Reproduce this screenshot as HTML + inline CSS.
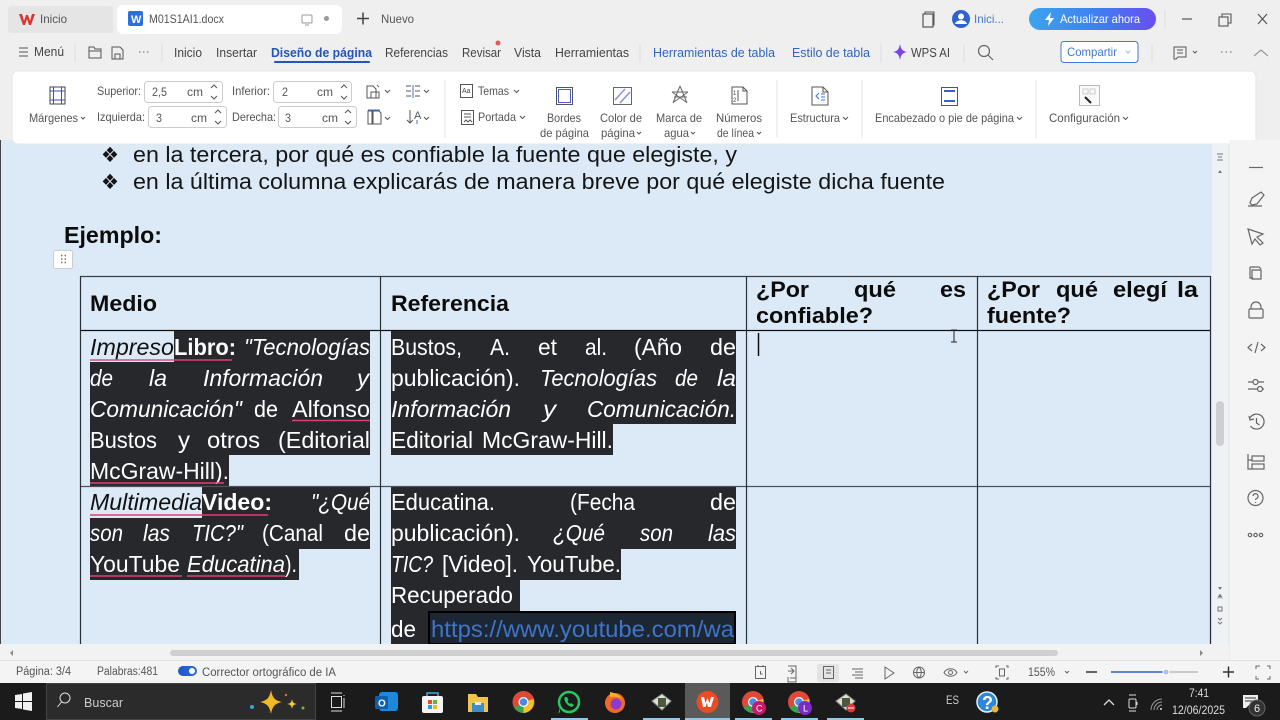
<!DOCTYPE html>
<html lang="es"><head><meta charset="utf-8"><title>M01S1AI1.docx</title>
<style>
html,body{margin:0;padding:0;width:1280px;height:720px;overflow:hidden;background:#efeff0}
svg{display:block;position:absolute;left:0;top:0}
text{font-family:"Liberation Sans",sans-serif;white-space:pre}
.u{font-size:12.5px;fill:#444}
.g{font-size:12px;fill:#555}
.c{font-size:23px;fill:#fff}
.k{fill:#111}
.i{font-style:italic}
.b{font-weight:bold}
.d{font-size:22px;fill:#151515}
.h{font-size:23px;font-weight:bold;fill:#0c0c0c}
.s{fill:none;stroke:#555;stroke-width:1}
.w{fill:none;stroke:#666;stroke-width:1.2}
</style></head><body>
<svg width="1280" height="720" viewBox="0 0 1280 720" xmlns="http://www.w3.org/2000/svg">
<!-- top chrome -->
<rect width="1280" height="720" fill="#efeff0"/>
<rect x="8" y="6" width="105" height="27" rx="3" fill="#e5e5e6"/>
<rect x="117" y="5" width="225" height="29" rx="6" fill="#fff"/>
<path d="M19 14h3l2 7 2-6h2l2 6 2-7h3l-4 11h-2l-2-6-2 6h-2z" fill="#d8352f"/>
<text x="40" y="23" class="g" textLength="27" lengthAdjust="spacingAndGlyphs">Inicio</text>
<rect x="128" y="11" width="15" height="15" rx="2" fill="#2b6fe0"/>
<text x="131" y="23" style="font-size:11px;font-weight:bold;fill:#fff">W</text>
<text x="149" y="23" class="g" fill="#444" textLength="75" lengthAdjust="spacingAndGlyphs">M01S1AI1.docx</text>
<rect x="302" y="15" width="10" height="8" rx="1" fill="none" stroke="#999"/><path d="M305 25h4" stroke="#999"/>
<circle cx="326.500" cy="18.500" r="2.500" fill="#999"/>
<path d="M357 18.500h12M363 12.500v12" stroke="#444" stroke-width="1.500"/>
<text x="381" y="23" class="g" fill="#666" textLength="33" lengthAdjust="spacingAndGlyphs">Nuevo</text>
<rect x="923" y="14" width="10" height="13" fill="none" stroke="#555" stroke-width="1.200"/><path d="M925 14v-2h9v13h-1" fill="none" stroke="#555"/>
<circle cx="961" cy="19" r="9" fill="#2e62cf"/><circle cx="961" cy="16.500" r="3" fill="#fff"/><path d="M955 24c1-5 11-5 12 0z" fill="#fff"/>
<text x="974" y="23" class="g" style="fill:#4a78d0" textLength="30" lengthAdjust="spacingAndGlyphs">Inici...</text>
<defs>
<linearGradient id="up" x1="0" x2="1" y1="0" y2="0"><stop offset="0" stop-color="#3ba4ee"/><stop offset=".55" stop-color="#3f7fef"/><stop offset="1" stop-color="#6a4df0"/></linearGradient>
<linearGradient id="sl" x1="0" x2="1"><stop offset="0" stop-color="#1f57c8"/><stop offset="1" stop-color="#2d6ae0"/></linearGradient>
</defs>
<rect x="1029" y="8" width="127" height="22" rx="11" fill="url(#up)"/>
<path d="M1051 12l-6 8h4l-1 6 6-8h-4z" fill="#fff"/>
<text x="1060" y="23" class="g" style="fill:#fff" textLength="80" lengthAdjust="spacingAndGlyphs">Actualizar ahora</text>
<path d="M1165 10v18" stroke="#ddd"/>
<path d="M1182 19h10" stroke="#555" stroke-width="1.200"/>
<rect x="1219" y="17" width="9" height="9" fill="none" stroke="#555" stroke-width="1.100"/><path d="M1222 17v-3h9v9h-3" fill="none" stroke="#555" stroke-width="1.100"/>
<path d="M1258 14l9 10M1267 14l-9 10" stroke="#555" stroke-width="1.200"/>
<!-- menu -->
<path d="M19 48h9M19 52h9M19 56h9" stroke="#555"/>
<text x="34" y="56" class="u" textLength="30" lengthAdjust="spacingAndGlyphs">Menú</text>
<path d="M75 44v18" stroke="#ddd"/>
<path d="M89 47h5l1 2h6v9H89z" class="s"/><path d="M89 51h12" class="s"/>
<path d="M112 47h8l3 3v9h-11z M115 54h5v5h-5z" class="s"/>
<path d="M139 52h1.500M143 52h1.500M147 52h1.500" stroke="#666"/>
<path d="M162 44v18" stroke="#ddd"/>
<text x="174" y="57" class="u" textLength="28" lengthAdjust="spacingAndGlyphs">Inicio</text>
<text x="216" y="57" class="u" textLength="41" lengthAdjust="spacingAndGlyphs">Insertar</text>
<text x="271" y="57" class="u b" style="fill:#2455b8" textLength="101" lengthAdjust="spacingAndGlyphs">Diseño de página</text>
<rect x="274" y="61" width="96" height="2" rx="1" fill="#2455b8"/>
<text x="385" y="57" class="u" textLength="63" lengthAdjust="spacingAndGlyphs">Referencias</text>
<text x="462" y="57" class="u" textLength="39" lengthAdjust="spacingAndGlyphs">Revisar</text>
<circle cx="498" cy="43" r="2.500" fill="#e2595a"/>
<text x="514" y="57" class="u" textLength="27" lengthAdjust="spacingAndGlyphs">Vista</text>
<text x="555" y="57" class="u" textLength="74" lengthAdjust="spacingAndGlyphs">Herramientas</text>
<path d="M640 44v18" stroke="#ddd"/>
<text x="653" y="57" class="u" style="fill:#2f66c0" textLength="122" lengthAdjust="spacingAndGlyphs">Herramientas de tabla</text>
<text x="792" y="57" class="u" style="fill:#2f66c0" textLength="78" lengthAdjust="spacingAndGlyphs">Estilo de tabla</text>
<path d="M881 44v18M964 44v18" stroke="#ddd"/>
<path d="M900 44c1 5 2 7 7 8-5 1-6 3-7 8-1-5-2-7-7-8 5-1 6-3 7-8z" fill="#7a42e8"/>
<text x="911" y="57" class="u" textLength="39" lengthAdjust="spacingAndGlyphs">WPS AI</text>
<circle cx="984" cy="51" r="5.500" class="w"/><path d="M988 55l5 5" class="w"/>
<rect x="1061" y="41.500" width="77" height="21" rx="3" fill="#fff" stroke="#3f78d6"/>
<text x="1067" y="56" class="g" style="fill:#3f78d6" textLength="50" lengthAdjust="spacingAndGlyphs">Compartir</text>
<path d="M1126 51l2 2 2-2" fill="none" stroke="#9ab8e8"/>
<path d="M1152 44v18" stroke="#ddd"/>
<path d="M1174 47h12v10h-8l-2 2h-2z M1177 50h6M1177 53h6" class="s"/><path d="M1193 51l2 2 2-2" fill="none" stroke="#555"/>
<path d="M1221 52h1.500M1225.500 52h1.500M1230 52h1.500" stroke="#666"/>
<path d="M1254 56l7-6 7 6" fill="none" stroke="#888"/>
<!-- document -->
<rect x="1" y="140" width="1211" height="506" fill="#dce9f6"/>
<rect x="0" y="140" width="1" height="520" fill="#444"/>
<!-- ribbon -->
<rect x="12" y="71" width="1244" height="73" rx="6" fill="#fff" stroke="#e6e6e6"/>
<rect x="50" y="87" width="15" height="17" fill="#fff" stroke="#444"/><path d="M50 91h15M50 100h15M53.500 87v17M61.500 87v17" stroke="#3a4fc0"/>
<text x="29" y="122" class="g" textLength="49" lengthAdjust="spacingAndGlyphs">Márgenes</text><path d="M81 117l2 2 2-2" class="s"/>
<text x="97" y="95" class="g" textLength="44" lengthAdjust="spacingAndGlyphs">Superior:</text>
<rect x="144.500" y="81.500" width="78" height="21" rx="3" fill="#fff" stroke="#ccc"/>
<text x="152" y="96" class="g" textLength="15" lengthAdjust="spacingAndGlyphs">2,5</text>
<text x="187" y="96" class="g" textLength="16" lengthAdjust="spacingAndGlyphs">cm</text>
<path d="M211 88l3-3 3 3M211 96l3 3 3-3" class="s"/>
<text x="232" y="95" class="g" textLength="38" lengthAdjust="spacingAndGlyphs">Inferior:</text>
<rect x="273.500" y="81.500" width="78" height="21" rx="3" fill="#fff" stroke="#ccc"/>
<text x="282" y="96" class="g" textLength="6" lengthAdjust="spacingAndGlyphs">2</text>
<text x="317" y="96" class="g" textLength="16" lengthAdjust="spacingAndGlyphs">cm</text>
<path d="M341 88l3-3 3 3M341 96l3 3 3-3" class="s"/>
<text x="97" y="121" class="g" textLength="48" lengthAdjust="spacingAndGlyphs">Izquierda:</text>
<rect x="148.500" y="106.500" width="78" height="21" rx="3" fill="#fff" stroke="#ccc"/>
<text x="156" y="122" class="g" textLength="6" lengthAdjust="spacingAndGlyphs">3</text>
<text x="191" y="122" class="g" textLength="16" lengthAdjust="spacingAndGlyphs">cm</text>
<path d="M215 113l3-3 3 3M215 121l3 3 3-3" class="s"/>
<text x="232" y="121" class="g" textLength="44" lengthAdjust="spacingAndGlyphs">Derecha:</text>
<rect x="278.500" y="106.500" width="78" height="21" rx="3" fill="#fff" stroke="#ccc"/>
<text x="285" y="122" class="g" textLength="6" lengthAdjust="spacingAndGlyphs">3</text>
<text x="322" y="122" class="g" textLength="16" lengthAdjust="spacingAndGlyphs">cm</text>
<path d="M345 113l3-3 3 3M345 121l3 3 3-3" class="s"/>
<path d="M367 86h6l3 3v9h-9z M371 92h8v6h-8z" class="s"/><path d="M377 85l2 2" stroke="#3a6fd0"/><path d="M385 90l2.500 2.500 2.500-2.500M385 117l2.500 2.500 2.500-2.500M424 90l2.500 2.500 2.500-2.500M424 117l2.500 2.500 2.500-2.500" class="s"/>
<path d="M406 86h5M406 91h5M406 96h5M415 86h5M415 91h5M415 96h5" stroke="#555"/><path d="M413 85v13" stroke="#3a6fd0"/>
<path d="M368 111h4v13h-4zM373 111h6l2 2v11h-8zM368 110h12" class="s"/><path d="M368 110h12" stroke="#3a6fd0"/>
<path d="M410 110v13M407 120l3 3 3-3" fill="none" stroke="#555"/><text x="414" y="119" style="font-size:11px;fill:#555">A</text><path d="M417 120v4" stroke="#3a6fd0"/>
<path d="M445 80v58" stroke="#e3e3e3"/>
<rect x="460.500" y="84.500" width="12" height="13" fill="none" stroke="#555"/><text x="462" y="93" style="font-size:7px;fill:#444">Aa</text>
<text x="478" y="95" class="g" textLength="31" lengthAdjust="spacingAndGlyphs">Temas</text><path d="M514 90l2.500 2.500 2.500-2.500" class="s"/>
<rect x="461.500" y="110.500" width="12" height="14" class="s"/><path d="M464 114h7M464 117h7M464 122l2-2 2 2 2-2 2 2" class="s"/>
<text x="478" y="121" class="g" textLength="38" lengthAdjust="spacingAndGlyphs">Portada</text><path d="M520 116l2.500 2.500 2.500-2.500" class="s"/>
<rect x="556.500" y="87.500" width="16" height="17" fill="none" stroke="#555"/><rect x="558.500" y="89.500" width="12" height="13" fill="none" stroke="#4a5fd0"/>
<text x="547" y="122" class="g" textLength="34" lengthAdjust="spacingAndGlyphs">Bordes</text>
<text x="540" y="137" class="g" textLength="49" lengthAdjust="spacingAndGlyphs">de página</text>
<rect x="613.500" y="87.500" width="18" height="17" fill="#fafafe" stroke="#666"/><path d="M615 100l10-11M620 103l10-11" stroke="#8a93d8" stroke-width="1.500"/>
<text x="600" y="122" class="g" textLength="42" lengthAdjust="spacingAndGlyphs">Color de</text>
<text x="601" y="137" class="g" textLength="34" lengthAdjust="spacingAndGlyphs">página</text><path d="M637 132l2 2 2-2" class="s"/>
<path d="M680 86l-7 17M680 86l7 17M674 97h13M672 92h16M672 92l14 10M688 92l-14 10" fill="none" stroke="#666"/>
<text x="656" y="122" class="g" textLength="46" lengthAdjust="spacingAndGlyphs">Marca de</text>
<text x="664" y="137" class="g" textLength="25" lengthAdjust="spacingAndGlyphs">agua</text><path d="M691 132l2 2 2-2" class="s"/>
<path d="M732 87h11l4 4v13h-15z M743 87v4h4 M738 90v11" class="s"/><text x="733" y="95" style="font-size:6px;fill:#444">1</text><text x="733" y="102" style="font-size:6px;fill:#444">2</text>
<text x="716" y="122" class="g" textLength="46" lengthAdjust="spacingAndGlyphs">Números</text>
<text x="717" y="137" class="g" textLength="37" lengthAdjust="spacingAndGlyphs">de línea</text><path d="M757 132l2 2 2-2" class="s"/>
<path d="M777 80v58M862 80v58M1036 80v58" stroke="#e3e3e3"/>
<path d="M812 87h11l5 5v13h-16z M823 87v5h5" class="s"/><path d="M819 93l-3 3 3 3M821 94h4M821 97h4M821 100h4" fill="none" stroke="#3a6fd0"/>
<text x="790" y="122" class="g" textLength="50" lengthAdjust="spacingAndGlyphs">Estructura</text><path d="M843 117l2.500 2.500 2.500-2.500" class="s"/>
<rect x="941.500" y="87.500" width="16" height="18" fill="none" stroke="#555"/><rect x="944" y="90" width="11" height="2" fill="#3a5fc8"/><rect x="944" y="100" width="11" height="2" fill="#3a5fc8"/>
<text x="875" y="122" class="g" textLength="139" lengthAdjust="spacingAndGlyphs">Encabezado o pie de página</text><path d="M1017 117l2.500 2.500 2.500-2.500" class="s"/>
<rect x="1079.500" y="85.500" width="20" height="20" fill="#fafafa" stroke="#bbb"/><path d="M1083 89h5v5h-5zM1090 89h5v5h-5z" fill="none" stroke="#ccc"/><path d="M1085 97l6 6" stroke="#222" stroke-width="2"/>
<text x="1049" y="122" class="g" textLength="71" lengthAdjust="spacingAndGlyphs">Configuración</text><path d="M1123 117l2.500 2.500 2.500-2.500" class="s"/>
<!-- doc text -->
<text x="101" y="162" class="d" textLength="18" lengthAdjust="spacingAndGlyphs" style="font-family:'DejaVu Sans',sans-serif;font-size:21px">❖</text>
<text x="133" y="162" class="d" textLength="604" lengthAdjust="spacingAndGlyphs">en la tercera, por qué es confiable la fuente que elegiste, y</text>
<text x="101" y="189" class="d" textLength="18" lengthAdjust="spacingAndGlyphs" style="font-family:'DejaVu Sans',sans-serif;font-size:21px">❖</text>
<text x="133" y="189" class="d" textLength="812" lengthAdjust="spacingAndGlyphs">en la última columna explicarás de manera breve por qué elegiste dicha fuente</text>
<text x="64" y="243" class="h" textLength="98" lengthAdjust="spacingAndGlyphs">Ejemplo:</text>
<rect x="53.500" y="250.500" width="19" height="18" rx="2" fill="#fff" stroke="#ccc"/>
<path d="M61 255.500h1.500M64.500 255.500h1.500M61 259h1.500M64.500 259h1.500M61 262.500h1.500M64.500 262.500h1.500" stroke="#777" stroke-width="1.500"/>
<!-- highlights -->
<g fill="#27282c">
<rect x="174" y="331" width="196" height="31"/><rect x="90" y="362" width="280" height="93"/><rect x="90" y="455" width="139" height="31"/>
<rect x="202" y="487" width="168" height="31"/><rect x="90" y="518" width="280" height="31"/><rect x="90" y="549" width="209" height="31"/>
<rect x="391" y="331" width="345" height="93"/><rect x="391" y="424" width="222" height="31"/>
<rect x="391" y="487" width="345" height="62"/><rect x="391" y="549" width="230" height="31"/><rect x="391" y="580" width="129" height="31"/><rect x="391" y="611" width="345" height="33"/>
</g>
<rect x="429" y="612" width="306" height="32" fill="#1d2733" stroke="#000" stroke-width="2"/>
<!-- table lines -->
<path d="M80 276.500H1211" stroke="#3a4048" stroke-width="1.300"/>
<path d="M80 330.500H1211" stroke="#111" stroke-width="1.300"/>
<path d="M80 486.500H1211" stroke="#4a525c" stroke-width="1.300"/>
<path d="M80.500 276V644M380.500 276V644M746.500 276V644M977.500 276V644M1210.500 276V644" stroke="#2a3038" stroke-width="1.200"/>
<!-- header text -->
<text x="90" y="311" class="h" style="font-size:22px" textLength="67" lengthAdjust="spacingAndGlyphs">Medio</text>
<text x="391" y="311" class="h" style="font-size:22px" textLength="118" lengthAdjust="spacingAndGlyphs">Referencia</text>
<text x="756" y="297" class="h" style="font-size:22px" textLength="53" lengthAdjust="spacingAndGlyphs">¿Por</text>
<text x="854" y="297" class="h" style="font-size:22px" textLength="42" lengthAdjust="spacingAndGlyphs">qué</text>
<text x="940" y="297" class="h" style="font-size:22px" textLength="26" lengthAdjust="spacingAndGlyphs">es</text>
<text x="756" y="323" class="h" style="font-size:22px" textLength="117" lengthAdjust="spacingAndGlyphs">confiable?</text>
<text x="987" y="297" class="h" style="font-size:22px" textLength="53" lengthAdjust="spacingAndGlyphs">¿Por</text>
<text x="1056" y="297" class="h" style="font-size:22px" textLength="42" lengthAdjust="spacingAndGlyphs">qué</text>
<text x="1113" y="297" class="h" style="font-size:22px" textLength="54" lengthAdjust="spacingAndGlyphs">elegí</text>
<text x="1177" y="297" class="h" style="font-size:22px" textLength="21" lengthAdjust="spacingAndGlyphs">la</text>
<text x="987" y="323" class="h" style="font-size:22px" textLength="84" lengthAdjust="spacingAndGlyphs">fuente?</text>
<path d="M758.500 333v23" stroke="#111" stroke-width="1.500"/>
<path d="M951 330h6M954 330v12M951 342h6" stroke="#222" fill="none"/>
<!-- col 1 row 1 -->
<text x="90" y="355" class="c k i" textLength="84" lengthAdjust="spacingAndGlyphs">Impreso</text>
<text x="174" y="355" class="c b" textLength="62" lengthAdjust="spacingAndGlyphs">Libro:</text>
<text x="244" y="355" class="c i" textLength="126" lengthAdjust="spacingAndGlyphs">"Tecnologías</text>
<text x="90" y="386" class="c i" textLength="23" lengthAdjust="spacingAndGlyphs">de</text>
<text x="149" y="386" class="c i" textLength="18" lengthAdjust="spacingAndGlyphs">la</text>
<text x="203" y="386" class="c i" textLength="120" lengthAdjust="spacingAndGlyphs">Información</text>
<text x="357" y="386" class="c i" textLength="12" lengthAdjust="spacingAndGlyphs">y</text>
<text x="90" y="417" class="c i" textLength="152" lengthAdjust="spacingAndGlyphs">Comunicación"</text>
<text x="254" y="417" class="c" textLength="24" lengthAdjust="spacingAndGlyphs">de</text>
<text x="292" y="417" class="c" textLength="78" lengthAdjust="spacingAndGlyphs">Alfonso</text>
<text x="90" y="448" class="c" textLength="67" lengthAdjust="spacingAndGlyphs">Bustos</text>
<text x="178" y="448" class="c" textLength="12" lengthAdjust="spacingAndGlyphs">y</text>
<text x="207" y="448" class="c" textLength="53" lengthAdjust="spacingAndGlyphs">otros</text>
<text x="278" y="448" class="c" textLength="92" lengthAdjust="spacingAndGlyphs">(Editorial</text>
<text x="90" y="479" class="c" textLength="139" lengthAdjust="spacingAndGlyphs">McGraw-Hill).</text>
<!-- col 1 row 2 -->
<text x="90" y="510" class="c k i" textLength="112" lengthAdjust="spacingAndGlyphs">Multimedia</text>
<text x="202" y="510" class="c b" textLength="70" lengthAdjust="spacingAndGlyphs">Video:</text>
<text x="311" y="510" class="c i" textLength="59" lengthAdjust="spacingAndGlyphs">"¿Qué</text>
<text x="90" y="541" class="c i" textLength="33" lengthAdjust="spacingAndGlyphs">son</text>
<text x="143" y="541" class="c i" textLength="27" lengthAdjust="spacingAndGlyphs">las</text>
<text x="192" y="541" class="c i" textLength="51" lengthAdjust="spacingAndGlyphs">TIC?"</text>
<text x="262" y="541" class="c" textLength="61" lengthAdjust="spacingAndGlyphs">(Canal</text>
<text x="344" y="541" class="c" textLength="26" lengthAdjust="spacingAndGlyphs">de</text>
<text x="90" y="572" class="c" textLength="90" lengthAdjust="spacingAndGlyphs">YouTube</text>
<text x="187" y="572" class="c i" textLength="98" lengthAdjust="spacingAndGlyphs">Educatina</text>
<text x="285" y="572" class="c" textLength="12" lengthAdjust="spacingAndGlyphs">).</text>
<!-- col 2 row 1 -->
<text x="391" y="355" class="c" textLength="71" lengthAdjust="spacingAndGlyphs">Bustos,</text>
<text x="490" y="355" class="c" textLength="20" lengthAdjust="spacingAndGlyphs">A.</text>
<text x="538" y="355" class="c" textLength="19" lengthAdjust="spacingAndGlyphs">et</text>
<text x="585" y="355" class="c" textLength="22" lengthAdjust="spacingAndGlyphs">al.</text>
<text x="634" y="355" class="c" textLength="48" lengthAdjust="spacingAndGlyphs">(Año</text>
<text x="710" y="355" class="c" textLength="26" lengthAdjust="spacingAndGlyphs">de</text>
<text x="391" y="386" class="c" textLength="129" lengthAdjust="spacingAndGlyphs">publicación).</text>
<text x="540" y="386" class="c i" textLength="117" lengthAdjust="spacingAndGlyphs">Tecnologías</text>
<text x="675" y="386" class="c i" textLength="23" lengthAdjust="spacingAndGlyphs">de</text>
<text x="717" y="386" class="c i" textLength="19" lengthAdjust="spacingAndGlyphs">la</text>
<text x="391" y="417" class="c i" textLength="120" lengthAdjust="spacingAndGlyphs">Información</text>
<text x="543" y="417" class="c i" textLength="13" lengthAdjust="spacingAndGlyphs">y</text>
<text x="587" y="417" class="c i" textLength="149" lengthAdjust="spacingAndGlyphs">Comunicación.</text>
<text x="391" y="448" class="c" textLength="82" lengthAdjust="spacingAndGlyphs">Editorial</text>
<text x="482" y="448" class="c" textLength="131" lengthAdjust="spacingAndGlyphs">McGraw-Hill.</text>
<!-- col 2 row 2 -->
<text x="391" y="510" class="c" textLength="104" lengthAdjust="spacingAndGlyphs">Educatina.</text>
<text x="570" y="510" class="c" textLength="65" lengthAdjust="spacingAndGlyphs">(Fecha</text>
<text x="710" y="510" class="c" textLength="26" lengthAdjust="spacingAndGlyphs">de</text>
<text x="391" y="541" class="c" textLength="129" lengthAdjust="spacingAndGlyphs">publicación).</text>
<text x="553" y="541" class="c i" textLength="52" lengthAdjust="spacingAndGlyphs">¿Qué</text>
<text x="640" y="541" class="c i" textLength="33" lengthAdjust="spacingAndGlyphs">son</text>
<text x="708" y="541" class="c i" textLength="28" lengthAdjust="spacingAndGlyphs">las</text>
<text x="391" y="572" class="c i" textLength="42" lengthAdjust="spacingAndGlyphs">TIC?</text>
<text x="442" y="572" class="c" textLength="76" lengthAdjust="spacingAndGlyphs">[Video].</text>
<text x="527" y="572" class="c" textLength="94" lengthAdjust="spacingAndGlyphs">YouTube.</text>
<text x="391" y="603" class="c" textLength="122" lengthAdjust="spacingAndGlyphs">Recuperado</text>
<text x="391" y="637" class="c" textLength="25" lengthAdjust="spacingAndGlyphs">de</text>
<text x="431" y="637" class="c" style="fill:#3f74c8" textLength="303" lengthAdjust="spacingAndGlyphs">https://www.youtube.com/wa</text>
<!-- spell lines -->
<g stroke="#e0406e" stroke-width="1.500" fill="none">
<path d="M90 360h84" stroke="#d8507c"/><path d="M174 360h58M292 420.500h78M90 483h134M90 515h112M202 515h66M90 576h92M187 576h98"/>
</g>
<!-- scrollbars -->
<rect x="1212" y="144" width="17" height="502" fill="#eef1f5"/>
<rect x="1229" y="140" width="51" height="520" fill="#f4f4f4"/>
<path d="M1229 144v516" stroke="#e2e2e2"/>
<rect x="1216" y="401" width="8" height="45" rx="4" fill="#cfcfcf"/>
<path d="M1217 154h6M1217 160h6M1218 157h4" stroke="#777"/><path d="M1220 170l-2 3h4z" fill="#777"/>
<path d="M1218 587l2 3 2-3z" fill="#777"/><path d="M1220 594l-2 3h4zM1217 598h6" fill="#777" stroke="#777" stroke-width=".5"/>
<rect x="1218" y="607" width="4" height="4" fill="none" stroke="#777"/><path d="M1218 618l2 2 2-2M1218 622l2 2 2-2" fill="none" stroke="#777"/>
<rect x="0" y="644" width="1229" height="16" fill="#f2f2f2"/>
<rect x="170" y="650" width="888" height="6" rx="3" fill="#cfcfcf"/>
<path d="M13 650l-3 3 3 3z" fill="#888"/><path d="M1200 650l3 3-3 3z" fill="#888"/>
<!-- side icons -->
<g class="w" fill="none" stroke="#666" stroke-width="1.100">
<path d="M1249 167.500h14"/>
<path d="M1250 203l2-5 9-6 3 3-7 9-5 1zM1248 206h14"/>
<path d="M1248 229l15 5-6 3 6 6-3 2-5-6-3 5z"/>
<path d="M1250 267h9l2 2M1250 267v11h3M1252 270h9v9h-9z"/>
<rect x="1249" y="309" width="14" height="9" rx="1"/><path d="M1251 309v-2a5 5 0 0 1 10 0v2"/>
<path d="M1252 344l-4 3.500 4 3.500M1261 344l4 3.500-4 3.500M1258 342l-3 11"/>
<path d="M1248 382h5M1258 382h6M1248 389h10M1262 389h2"/><circle cx="1255.500" cy="382" r="2.500"/><circle cx="1260" cy="389" r="2.500"/>
<path d="M1250 418a7.500 7.500 0 1 1 .5 8M1249 416l1 4 4-1M1256.500 418v5l3 2"/>
<path d="M1248 454v15h4M1248 460h4"/><rect x="1252" y="456" width="12" height="5"/><rect x="1252" y="464" width="12" height="5"/>
<circle cx="1255.500" cy="498" r="7.500"/><path d="M1253 496a2.500 2.500 0 1 1 3.500 2.500c-.8.400-1 .8-1 1.500M1255.500 502v1"/>
<circle cx="1250" cy="535" r="1.700"/><circle cx="1255.500" cy="535" r="1.700"/><circle cx="1261" cy="535" r="1.700"/>
</g>
<!-- status bar -->
<rect x="0" y="660" width="1280" height="23" fill="#f4f4f4"/><path d="M0 660.500h1280" stroke="#e2e2e2"/>
<text x="16" y="675" class="g" style="font-size:11.500px" textLength="55" lengthAdjust="spacingAndGlyphs">Página: 3/4</text>
<text x="97" y="675" class="g" style="font-size:11.500px" textLength="61" lengthAdjust="spacingAndGlyphs">Palabras:481</text>
<rect x="178" y="666" width="19" height="10" rx="5" fill="url(#sl)"/><circle cx="192" cy="671" r="3" fill="#fff"/>
<text x="202" y="676" class="g" style="font-size:11.500px" textLength="134" lengthAdjust="spacingAndGlyphs">Corrector ortográfico de IA</text>
<rect x="817" y="664" width="22" height="18" rx="2" fill="#e3e3e3"/>
<g fill="none" stroke="#666">
<rect x="755.500" y="666.500" width="10" height="12"/><path d="M758 665v2M763 665v2M760.500 671v3h2"/>
<path d="M788 666h8v16h-8v-5M788 671h6M791 668l3 3-3 3M790 678h6"/>
<rect x="823.500" y="666.500" width="10" height="12"/><path d="M826 670h5M826 673h5"/>
<path d="M852 669h11M855 672h8M852 675h11M855 678h8"/>
<path d="M885 667v12l9-6z"/>
<circle cx="919" cy="672.500" r="5.500"/><path d="M913.500 672.500h11M919 667c-3 3-3 8 0 11M919 667c3 3 3 8 0 11"/>
<path d="M944 672.500c3-5 10-5 13 0-3 5-10 5-13 0z"/><circle cx="950.500" cy="672.500" r="2"/><path d="M964 671l2 2 2-2"/>
<path d="M996 668v-2h3M1006 666h2v2M996 677v2h3M1006 679h2v-2"/><rect x="999.500" y="669" width="5" height="7"/>
<path d="M1065 671l2 2 2-2"/>
<path d="M1256 669v-3h4M1267 666h3v3M1256 676v3h3M1270 676v3h-3"/>
</g>
<text x="1028" y="676" class="g" style="font-size:11.500px" textLength="27" lengthAdjust="spacingAndGlyphs">155%</text>
<path d="M1086 672h11M1223 672h11M1228.500 666.500v11" stroke="#333" stroke-width="1.500"/>
<path d="M1111 672h52" stroke="#2b62d0" stroke-width="1.500"/><path d="M1168 672h30" stroke="#bbb" stroke-width="1.500"/>
<circle cx="1166" cy="672" r="3" fill="#a8c0e8" stroke="#fff"/>
<!-- taskbar -->
<rect x="0" y="683" width="1280" height="37" fill="#1b1b1b"/>
<path d="M15 695l7-1v7h-7zM23 693.500l9-1.500v9h-9zM15 702h7v7l-7-1zM23 702h9v9l-9-1.500z" fill="#f2f2f2"/>
<rect x="46.500" y="683.500" width="269" height="36" fill="#2b2b2b" stroke="#444"/>
<circle cx="65" cy="698" r="5" fill="none" stroke="#ddd"/><path d="M61.500 702l-4 5" stroke="#ddd"/>
<text x="84" y="707" style="font-size:13px;fill:#ccc" textLength="39" lengthAdjust="spacingAndGlyphs">Buscar</text>
<path d="M271 690c1.500 8 4 10.500 11 12-7 1.500-9.500 4-11 12-1.500-8-4-10.500-11-12 7-1.500 9.500-4 11-12z" fill="#f2b926"/>
<path d="M292 699c.7 3.500 1.700 4.500 5 5-3.300.5-4.300 1.500-5 5-.7-3.500-1.700-4.500-5-5 3.300-.5 4.300-1.500 5-5z" fill="#f2c63a"/>
<circle cx="252" cy="707" r="2" fill="#3aa0d8"/><circle cx="303" cy="708" r="1.500" fill="#8ab040"/><circle cx="286" cy="695" r="1.200" fill="#d87a3a"/>
<path d="M331 693h11M331 711h11M344 695v1M344 698v10" stroke="#ddd" fill="none"/><rect x="331.500" y="696.500" width="10" height="11" fill="none" stroke="#ddd"/>
<!-- outlook -->
<rect x="379" y="692" width="19" height="19" rx="3" fill="#1c8ad8"/><rect x="375" y="696" width="13" height="13" rx="1.500" fill="#0f5fb0"/><text x="378" y="706.500" style="font-size:10px;font-weight:bold;fill:#fff">O</text>
<!-- store -->
<rect x="422" y="696" width="21" height="17" rx="2" fill="#f4f4f4"/><path d="M427 696v-3h11v3" fill="none" stroke="#3ab0e0" stroke-width="1.500"/>
<rect x="428" y="700" width="4" height="4" fill="#e84c2a"/><rect x="433" y="700" width="4" height="4" fill="#6cb82c"/><rect x="428" y="705" width="4" height="4" fill="#2a9fe0"/><rect x="433" y="705" width="4" height="4" fill="#f2b81e"/>
<!-- folder -->
<path d="M468 694h8l2 3h10v15h-20z" fill="#f2c54a"/><rect x="472" y="703" width="12" height="9" fill="#3d8ec8"/><rect x="475" y="702" width="6" height="3" fill="#e9e9e9"/>
<!-- chrome -->
<circle cx="523.500" cy="702" r="11" fill="#dd4a3a"/><path d="M523.500 702l-9.500 5.500a11 11 0 0 0 11 5.500z" fill="#3ca04f"/><path d="M523.500 702v11a11 11 0 0 0 10-14z" fill="#f4c22d"/><circle cx="523.500" cy="702" r="5" fill="#fff"/><circle cx="523.500" cy="702" r="3.800" fill="#4a8ae8"/>
<!-- whatsapp -->
<circle cx="569" cy="702" r="10" fill="none" stroke="#28c75f" stroke-width="2.500"/><path d="M560 712l-1.500 1.500 1-6z" fill="#28c75f"/><path d="M565 697c-2 3 2 9 7 10l2-2-3-2-1 1c-1-.5-2-1.500-2.500-3l1-1-1.500-3z" fill="#28c75f"/>
<rect x="551" y="718" width="37" height="2" fill="#8fc8ec"/>
<!-- firefox -->
<circle cx="615" cy="703" r="10" fill="#ef6a2a"/><circle cx="616" cy="704" r="5.500" fill="#8e3bc9"/><path d="M610 692c4 1 9 2 12 7-3-2-8-3-12-2z" fill="#f7b32b"/>
<rect x="643" y="718" width="37" height="2" fill="#8fc8ec"/>
<!-- app -->
<path d="M652 701l10-7 9 7-9 9z" fill="#e0e0d0" stroke="#888"/><rect x="658" y="698" width="8" height="9" fill="#4a5a40"/>
<!-- wps -->
<rect x="685" y="683" width="45" height="35" fill="#5a5a5a"/><circle cx="707.500" cy="702" r="11" fill="#ee4a24"/>
<path d="M701 697h3l1.500 6 2-5 2 5 1.500-6h3l-3 10h-3l-1-4-1.500 4h-2.500z" fill="#fff"/>
<rect x="685" y="718" width="45" height="2" fill="#8fc8ec"/>
<!-- chrome c -->
<circle cx="753" cy="702" r="11" fill="#dd4a3a"/><path d="M753 702l-9.500 5.500a11 11 0 0 0 11 5.500z" fill="#3ca04f"/><path d="M753 702v11a11 11 0 0 0 10-14z" fill="#f4c22d"/><circle cx="753" cy="702" r="5" fill="#fff"/><circle cx="753" cy="702" r="3.800" fill="#4a8ae8"/>
<circle cx="759" cy="708" r="7" fill="#c8186e"/><text x="756" y="711.500" style="font-size:9px;fill:#fff">C</text>
<rect x="735" y="718" width="37" height="2" fill="#8fc8ec"/>
<!-- chrome l -->
<circle cx="799" cy="702" r="11" fill="#dd4a3a"/><path d="M799 702l-9.500 5.500a11 11 0 0 0 11 5.500z" fill="#3ca04f"/><path d="M799 702v11a11 11 0 0 0 10-14z" fill="#f4c22d"/><circle cx="799" cy="702" r="5" fill="#fff"/><circle cx="799" cy="702" r="3.800" fill="#4a8ae8"/>
<circle cx="805" cy="708" r="7" fill="#7a2cc0"/><text x="803" y="711.500" style="font-size:9px;fill:#fff">L</text>
<rect x="781" y="718" width="37" height="2" fill="#8fc8ec"/>
<!-- app 2 -->
<path d="M836 701l10-7 9 7-9 9z" fill="#e0e0d0" stroke="#888"/><rect x="842" y="698" width="8" height="9" fill="#4a5a40"/><circle cx="851" cy="708" r="4.500" fill="#d83a3a"/><path d="M848 708h6" stroke="#fff"/>
<rect x="827" y="718" width="37" height="2" fill="#8fc8ec"/>
<!-- tray -->
<text x="946" y="704" style="font-size:12px;fill:#ccc" textLength="13" lengthAdjust="spacingAndGlyphs">ES</text>
<circle cx="987" cy="702" r="10" fill="#2d86d8" stroke="#e6f2fb" stroke-width="1.500"/><text x="982" y="709" style="font-size:18px;font-weight:bold;fill:#fff">?</text><circle cx="995" cy="709" r="3.500" fill="#e8b838"/>
<path d="M1104 705l5-5 5 5" fill="none" stroke="#ddd" stroke-width="1.300"/>
<rect x="1129" y="699" width="7" height="9" rx="1" fill="none" stroke="#ddd"/><path d="M1129 695h7M1129 711h7M1137 702v3" stroke="#ddd"/>
<path d="M1151 710a11 11 0 0 1 11-11M1154 710a8 8 0 0 1 8-8M1157 710a5 5 0 0 1 5-5" fill="none" stroke="#999"/><circle cx="1161" cy="709" r="1" fill="#ddd"/>
<text x="1189" y="697" style="font-size:12px;fill:#ddd" textLength="20" lengthAdjust="spacingAndGlyphs">7:41</text>
<text x="1172" y="714" style="font-size:12px;fill:#ddd" textLength="53" lengthAdjust="spacingAndGlyphs">12/06/2025</text>
<path d="M1243 695h15v10h-9l-3 3h-3z" fill="#eee"/><path d="M1245 698h11M1245 701h11" stroke="#333"/>
<circle cx="1257" cy="708" r="8" fill="#333" stroke="#666"/><text x="1254" y="712" style="font-size:11px;fill:#eee">6</text>
</svg>
</body></html>
